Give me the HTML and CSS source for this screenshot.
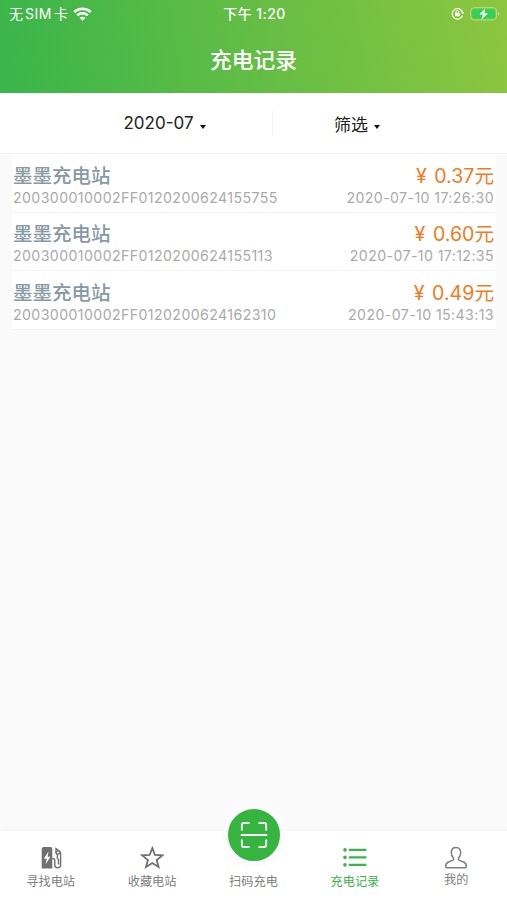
FILE: index.html
```
<!DOCTYPE html>
<html lang="zh-CN">
<head>
  <meta charset="UTF-8">
  <meta name="viewport" content="width=device-width, initial-scale=1.0">
  <title>充电记录</title>
  <link rel="stylesheet" href="styles.css">
</head>
<body>

<div class="app">
  <!-- Header -->
  <header class="header">
    <div class="status-bar">
      <div class="carrier">
        <span class="carrier-name">无<span class="sim">SIM</span>卡</span>
        <svg width="19" height="14" viewBox="0 0 19 14" fill="none" stroke="#fff" stroke-width="2.6">
          <path d="M1.2 5.1C5.8.6 13.2.6 17.8 5.1"/>
          <path d="M4.2 8.4C7.2 5.6 11.8 5.6 14.8 8.4"/>
          <path d="M9.5 13.7L6.5 10.8C8.2 9.3 10.8 9.3 12.5 10.8Z" fill="#fff" stroke="none"/>
        </svg>
      </div>
      <div class="clock">下午 1:20</div>
      <div class="power">
        <svg width="13" height="13" viewBox="0 0 13 13" fill="none" stroke="#fff">
          <path d="M11.5 8.8A5.3 5.3 0 1 1 11.8 6" stroke-width="1.2"/>
          <path d="M10.2 5.5H13L11.7 7.6Z" fill="#fff" stroke="none"/>
          <rect x="4.1" y="5.8" width="4.6" height="3.5" rx=".5" fill="#fff" stroke="none"/>
          <path d="M5 6V4.8a1.4 1.4 0 0 1 2.8 0V6" stroke-width=".9"/>
        </svg>
        <svg width="30" height="14" viewBox="0 0 30 14">
          <rect x=".6" y=".6" width="26" height="12.4" rx="3.6" fill="none" stroke="#b3dc88" stroke-width="1"/>
          <rect x="2.2" y="2.2" width="22.8" height="9.2" rx="2.2" fill="#31d158"/>
          <path d="M28 4.6c2 .8 2 3.6 0 4.4z" fill="#b3dc88"/>
          <path d="M15.2 1.6L9.3 7.4h3.6L11.5 12.4 18 6.3h-3.7z" fill="#fff"/>
        </svg>
      </div>
    </div>
    <h1 class="title">充电记录</h1>
  </header>

  <!-- Filters -->
  <div class="filters">
    <button class="filter month">2020-07<span class="caret"></span></button>
    <button class="filter choose">筛选<span class="caret"></span></button>
  </div>

  <!-- Records -->
  <main class="records">
    <div class="record">
      <div class="row"><span class="station">墨墨充电站</span><span class="price">¥ 0.37元</span></div>
      <div class="row meta"><span class="order">200300010002FF0120200624155755</span><span class="time">2020-07-10 17:26:30</span></div>
    </div>
    <div class="record">
      <div class="row"><span class="station">墨墨充电站</span><span class="price">¥ 0.60元</span></div>
      <div class="row meta"><span class="order">200300010002FF0120200624155113</span><span class="time">2020-07-10 17:12:35</span></div>
    </div>
    <div class="record">
      <div class="row"><span class="station">墨墨充电站</span><span class="price">¥ 0.49元</span></div>
      <div class="row meta"><span class="order">200300010002FF0120200624162310</span><span class="time">2020-07-10 15:43:13</span></div>
    </div>
  </main>

  <!-- Tab bar -->
  <nav class="tabs">
    <a class="tab">
      <svg width="24" height="24" viewBox="0 0 24 24">
        <path d="M4.7 1h6.6q2 0 2 2v19.5H2.7V3q0-2 2-2z" fill="#707070"/>
        <path d="M9.5 5.4L4.8 12.8h3L6.6 18.3l4.9-7.6H8.7z" fill="#fff"/>
        <path d="M13.3 12.7h1.2q1.3 0 1.3 1.4v5.2q0 2.4 2.9 2.4t2.9-2.4V7.2q0-1.2-1-2L16.3 2M17 3.2v3.6q0 1.5 1.6 2l-.4 2.8 1.3 2v5" fill="none" stroke="#707070" stroke-width="1.4"/>
        <circle cx="18.9" cy="6.6" r="1.7" fill="#fff" stroke="#707070" stroke-width="1.2"/>
      </svg>
      <span>寻找电站</span>
    </a>
    <a class="tab">
      <svg width="24" height="24" viewBox="0 0 24 24" fill="none" stroke="#707070" stroke-width="1.8">
        <path d="M12.3 2.2l2.7 6.8 7.4.4-5.7 4.6 1.9 7.1-6.3-4-6.3 4 1.9-7.1-5.7-4.6 7.4-.4z"/>
      </svg>
      <span>收藏电站</span>
    </a>
    <a class="tab scan">
      <div class="scan-button">
        <svg width="28" height="28" viewBox="0 0 28 28" fill="none" stroke="#fff" stroke-width="1.8">
          <path d="M1.8 9.5V4q0-2 2-2h5.7M18.5 2h5.7q2 0 2 2v5.5M1.8 18.5V24q0 2 2 2h5.7M18.5 26h5.7q2 0 2-2v-5.5M.8 14h26.4"/>
        </svg>
      </div>
      <span>扫码充电</span>
    </a>
    <a class="tab active">
      <svg width="24" height="24" viewBox="0 0 24 24" fill="#39b54a">
        <circle cx="2" cy="3.9" r="1.8"/>
        <circle cx="2" cy="11.4" r="1.8"/>
        <circle cx="2" cy="18.9" r="1.8"/>
        <path d="M5.8 2.7h17.6v2.4H5.8zM5.8 10.2h17.6v2.4H5.8zM5.8 17.7h17.6v2.4H5.8z"/>
      </svg>
      <span>充电记录</span>
    </a>
    <a class="tab mine">
      <svg width="24" height="24" viewBox="0 0 24 24" fill="none" stroke="#808080" stroke-width="1.5">
        <path d="M12 1.5C8.7 1.5 7.3 3.7 7.3 6.5c0 2.3.7 3.9 1.9 5.2.8 1 .5 2.2-.7 2.7l-4 1.6C2.4 16.9 1.6 18.5 1.6 20.5q0 1.2 1.3 1.2h18.2q1.3 0 1.3-1.2c0-2-.8-3.6-2.9-4.5l-4-1.6c-1.2-.5-1.5-1.7-.7-2.7 1.2-1.3 1.9-2.9 1.9-5.2 0-2.8-1.4-5-4.7-5z"/>
      </svg>
      <span>我的</span>
    </a>
  </nav>
</div>

</body>
</html>
```
FILE: styles.css
```
* {
  box-sizing: border-box;
}

body {
  margin: 0;
  background-color: #fafafa;
  font-family: Inter, "Noto Sans CJK SC", sans-serif;
}

.app {
  display: flex;
  flex-direction: column;
  height: 900px;
}

svg {
  display: block;
}

/* Header */
.header {
  height: 93px;
  color: white;
  background: linear-gradient(80deg, #39b54a, #8dc63f);
}

.status-bar {
  display: grid;
  grid-template-columns: 1fr auto 1fr;
  align-items: center;
  height: 27px;
  padding: 0 7px 0 9px;
  font-size: 14px;
  line-height: 16px;
}

.carrier {
  display: flex;
  align-items: center;
  gap: 5px;
}

.sim {
  margin: 0 2px;
  letter-spacing: 0.5px;
}

.clock {
  font-weight: 500;
  letter-spacing: 0.4px;
}

.power {
  display: flex;
  justify-content: flex-end;
  align-items: center;
  gap: 6px;
}

.title {
  margin: 0;
  font-size: 21.8px;
  font-weight: 500;
  line-height: 66px;
  text-align: center;
}

/* Filters */
.filters {
  display: flex;
  align-items: center;
  height: 61px;
  background: white;
  border-bottom: 1px solid #f2f2f2;
}

.filter {
  display: flex;
  justify-content: center;
  align-items: center;
  gap: 6px;
  height: 24px;
  padding: 0;
  border: none;
  background: none;
  font-family: inherit;
  font-size: 17px;
  color: #222;
}

.month {
  width: 273px;
  padding-left: 57px;
  border-right: 1px solid #f2f2f2;
}

.choose {
  flex: 1;
  padding-right: 66px;
}

.caret {
  margin-top: 7px;
  border: 3.5px solid transparent;
  border-top: 4px solid #111;
  border-bottom: none;
}

/* Records */
.records {
  flex: 1;
  padding: 0 11px 0 12px;
}

.record {
  height: 58.6px;
  padding: 7px 2px 0 1px;
  background: white;
  border-bottom: 1px solid #f4f4f4;
}

.row {
  display: flex;
  justify-content: space-between;
  align-items: center;
  height: 26px;
}

.meta {
  height: 20px;
  font-size: 14.2px;
  letter-spacing: 0.38px;
  color: #aaa;
}

.station {
  font-size: 19.5px;
  font-weight: 500;
  color: #8799a3;
}

.price {
  font-size: 19.6px;
  word-spacing: 2px;
  color: #f37b1d;
}

/* Tab bar */
.tabs {
  display: grid;
  grid-template-columns: repeat(5, 1fr);
  height: 69px;
  background: white;
  box-shadow: 0 -1px 3px rgba(0, 0, 0, 0.04);
}

.tab {
  display: flex;
  flex-direction: column;
  align-items: center;
  gap: 3px;
  padding-top: 15px;
  font-size: 12.2px;
  line-height: 18px;
  color: #808080;
}

.active {
  color: #39b54a;
}

.mine {
  gap: 1px;
}

/* Round scan button rises above the bar */
.scan {
  gap: 6px;
  padding-top: 0;
}

.scan-button {
  display: flex;
  justify-content: center;
  align-items: center;
  width: 64px;
  height: 64px;
  margin-top: -28px;
  margin-left: 1px;
  border: 6px solid #fcfcfc;
  border-radius: 50%;
  background: #35b440;
}
```
